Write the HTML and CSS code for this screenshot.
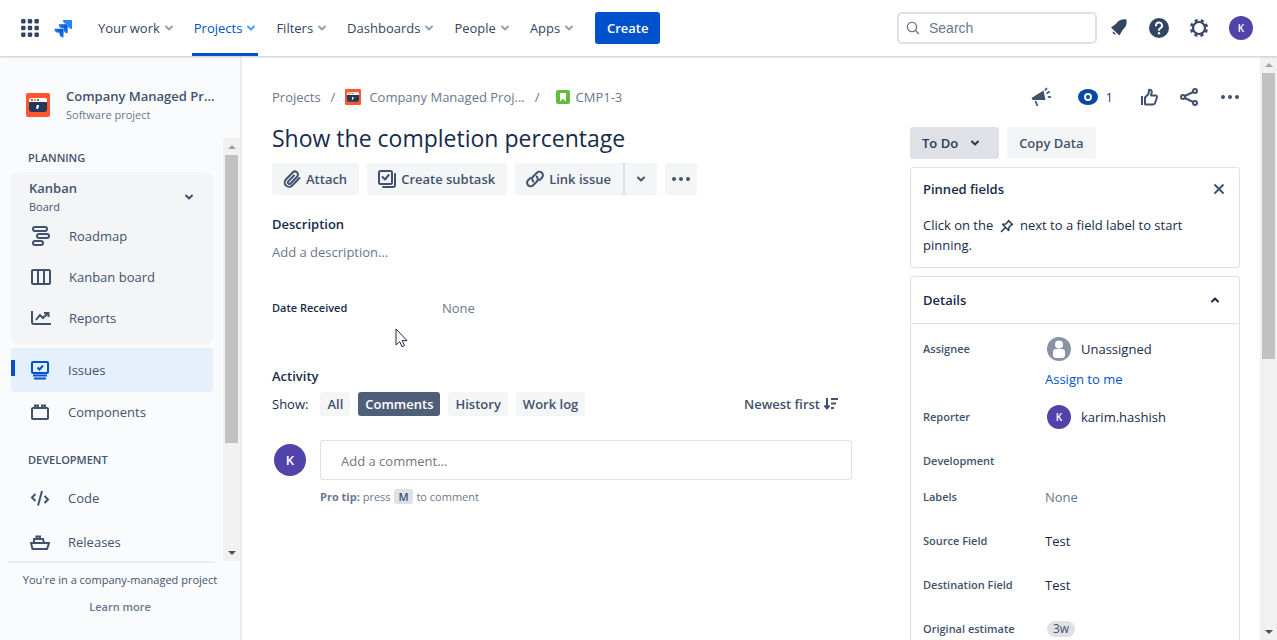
FILE: index.html
```html
<!DOCTYPE html>
<html lang="en">
<head>
<meta charset="utf-8">
<title>Show the completion percentage</title>
<link rel="stylesheet" href="styles.css">
</head>
<body>
<svg class="defs" aria-hidden="true">
  <symbol id="chev" viewBox="0 0 10 10"><path d="M2 3.500 5 6.500l3-3" fill="none" stroke="currentColor" stroke-width="2" stroke-linecap="round" stroke-linejoin="round"/></symbol>
  <symbol id="project" viewBox="0 0 24 24"><rect width="24" height="24" rx="2" fill="#ff5630"/><path d="M3 7a2 2 0 0 1 2-2h14a2 2 0 0 1 2 2v3H3z" fill="#fff"/><path d="M3 9h18v7a3 3 0 0 1-3 3H6a3 3 0 0 1-3-3z" fill="#253858"/><path d="M5 6h2v2H5z" fill="#ff5630"/><path d="M8 6h2v2H8z" fill="#ffab00"/><path d="M11 6h2v2h-2z" fill="#2684ff"/><path d="M11 12h2v1l-1 3h-1.600v-2.500z" fill="#fff"/></symbol>
</svg>
<header class="topbar">
  <button class="icon-btn apps" aria-label="Switch apps"><svg width="18" height="18" viewBox="0 0 18 18" fill="#344563"><rect x="1" y="1" width="4" height="4" rx="1"/><rect x="7" y="1" width="4" height="4" rx="1"/><rect x="13" y="1" width="4" height="4" rx="1"/><rect x="1" y="7" width="4" height="4" rx="1"/><rect x="7" y="7" width="4" height="4" rx="1"/><rect x="13" y="7" width="4" height="4" rx="1"/><rect x="1" y="13" width="4" height="4" rx="1"/><rect x="7" y="13" width="4" height="4" rx="1"/><rect x="13" y="13" width="4" height="4" rx="1"/></svg></button>
  <a class="logo" href="#" aria-label="Jira home"><svg width="19" height="19" viewBox="0 0 20 20"><defs><linearGradient id="g" x1="1" y1="0" x2="0.300" y2="0.700"><stop offset="0.200" stop-color="#0052cc"/><stop offset="1" stop-color="#2684ff"/></linearGradient></defs><path d="M9.500 1H19v9.500A4.300 4.300 0 0 1 14.700 6.200V5.200h-1A4.200 4.200 0 0 1 9.500 1z" fill="#2684ff"/><path d="M5 5.600h9.400v9.400a4.200 4.200 0 0 1-4.200-4.200v-1H9.200A4.200 4.200 0 0 1 5 5.600z" fill="url(#g)"/><path d="M.5 10.200H10v9.400a4.200 4.200 0 0 1-4.300-4.200v-1h-1a4.200 4.200 0 0 1-4.200-4.200z" fill="url(#g)"/></svg></a>
  <nav class="menu">
    <button>Your work<svg><use href="#chev"/></svg></button>
    <button class="current">Projects<svg><use href="#chev"/></svg></button>
    <button>Filters<svg><use href="#chev"/></svg></button>
    <button>Dashboards<svg><use href="#chev"/></svg></button>
    <button>People<svg><use href="#chev"/></svg></button>
    <button>Apps<svg><use href="#chev"/></svg></button>
  </nav>
  <button class="create">Create</button>
  <label class="search"><svg width="16" height="16" viewBox="0 0 16 16" fill="none" stroke="#6b778c" stroke-width="1.400" stroke-linecap="round"><circle cx="7" cy="7" r="4.600"/><path d="m10.500 10.500 3 3"/></svg><input type="text" placeholder="Search" aria-label="Search"></label>
  <div class="tools">
    <button class="icon-btn" aria-label="Notifications"><svg width="24" height="24" viewBox="0 0 24 24" fill="#344563"><path d="M4 11.500C6 10 8.500 8.500 10.500 6c2-2 5-3 9-2.600.6 4-.4 7-2.500 9-2 2-3 4.500-4.600 7z"/><path d="M6 15.200 9 18a2.100 2.100 0 0 1-3-2.800z"/></svg></button>
    <button class="icon-btn" aria-label="Help"><svg width="24" height="24" viewBox="0 0 24 24"><circle cx="12" cy="12" r="10" fill="#344563"/><path d="M9 9.400a3 3 0 1 1 4.400 2.700c-.9.500-1.400 1-1.400 2" fill="none" stroke="#fff" stroke-width="2" stroke-linecap="round"/><circle cx="12" cy="17.300" r="1.200" fill="#fff"/></svg></button>
    <button class="icon-btn" aria-label="Settings"><svg width="24" height="24" viewBox="0 0 24 24" fill="none" stroke="#344563"><circle cx="12" cy="12" r="6" stroke-width="2.200"/><circle cx="12" cy="12" r="7.900" stroke-width="2.400" stroke-dasharray="3.100 3.105" stroke-dashoffset="-1.550"/></svg></button>
    <button class="avatar small" aria-label="Your profile">K</button>
  </div>
</header>
<div class="page">
  <aside class="sidebar">
    <div class="project">
      <svg width="24" height="24"><use href="#project"/></svg>
      <div><div class="project-name">Company Managed Pr...</div><div class="project-type">Software project</div></div>
    </div>
    <div class="side-scroll">
      <nav class="side-nav">
        <h2>Planning</h2>
        <div class="board">
          <button class="board-head"><span><b>Kanban</b><small>Board</small></span><svg><use href="#chev"/></svg></button>
          <a href="#"><svg viewBox="0 0 20 20"><rect x="2" y="1" width="14" height="4" rx="2"/><rect x="6" y="8" width="12" height="4" rx="2"/><rect x="2" y="15" width="10" height="4" rx="2"/></svg>Roadmap</a>
          <a href="#"><svg viewBox="0 0 20 20"><rect x="1" y="3" width="18" height="14" rx="1"/><path d="M7 3v14M13 3v14"/></svg>Kanban board</a>
          <a href="#"><svg viewBox="0 0 20 20"><path d="M1 3v11a2 2 0 0 0 2 2h17M5 12l4-5 3 3 5-5M13 5h4.500v4"/></svg>Reports</a>
        </div>
        <a class="selected" href="#"><svg viewBox="0 0 20 20"><rect x="2" y="2" width="16" height="11" rx="1"/><path d="M3 15.500h14M4 18.500h12M7.500 7.500l2 2 3.500-4"/></svg>Issues</a>
        <a class="components" href="#"><svg viewBox="0 0 20 20"><rect x="2" y="6" width="16" height="11" rx="1"/><path d="M5 5.500V3.500h3v2M12 5.500V3.500h3v2"/></svg>Components</a>
        <h2 class="dev">Development</h2>
        <a href="#"><svg viewBox="0 0 20 20"><path d="M5.500 6 2 9.500 5.500 13M14.500 8l3.500 3.500-3.500 3.500M12 3 8 17.500"/></svg>Code</a>
        <a href="#"><svg viewBox="0 0 20 20"><path d="M1 11h18l-2 6H2.500zM4 11V7h9l1 4M6.500 7V4.500H10V7"/></svg>Releases</a>
      </nav>
      <div class="bar side-bar"><i class="up"></i><i class="thumb"></i><i class="down"></i></div>
    </div>
    <footer class="side-foot"><p>You're in a company-managed project</p><a href="#">Learn more</a></footer>
  </aside>
  <main class="issue">
    <section class="content">
      <nav class="crumbs"><a href="#">Projects</a><span>/</span><a href="#"><svg class="crumb-project"><use href="#project"/></svg>Company Managed Proj...</a><span>/</span><a href="#"><svg class="crumb-type" viewBox="0 0 14 14"><rect width="14" height="14" rx="2" fill="#63ba3c"/><path d="M4 3h6v8.500L7 8.800l-3 2.700z" fill="#fff"/></svg>CMP1-3</a></nav>
      <h1>Show the completion percentage</h1>
      <div class="actions">
        <button class="btn"><svg width="20" height="20" viewBox="0 0 20 20"><path d="m17.500 9-7.300 7.500a4.300 4.300 0 0 1-6.300-6l6.800-7a3 3 0 0 1 4.400 4.200l-6.600 6.800a1.500 1.500 0 0 1-2.200-2.100l5.700-5.900"/></svg>Attach</button>
        <button class="btn"><svg width="20" height="20" viewBox="0 0 20 20"><rect x="2" y="2" width="13" height="13" rx="1.500"/><path d="M18 5v11a2 2 0 0 1-2 2H6M5.500 8l2.500 2.500L11.700 6"/></svg>Create subtask</button>
        <div class="split"><button class="btn"><svg width="20" height="20" viewBox="0 0 20 20"><path d="M8.300 12.500a3.700 3.700 0 0 1 0-5.200l3.600-3.600a3.500 3.500 0 0 1 5 5l-2.400 2.400M11.700 7.500a3.700 3.700 0 0 1 0 5.200l-3.600 3.600a3.500 3.500 0 0 1-5-5l2.400-2.400"/></svg>Link issue</button><button class="btn narrow" aria-label="More link options"><svg width="10" height="10"><use href="#chev"/></svg></button></div>
        <button class="btn narrow" aria-label="More actions"><svg width="20" height="20" viewBox="0 0 20 20" class="dots"><circle cx="3" cy="10" r="2"/><circle cx="10" cy="10" r="2"/><circle cx="17" cy="10" r="2"/></svg></button>
      </div>
      <h3>Description</h3>
      <p class="placeholder">Add a description...</p>
      <dl class="date"><dt>Date Received</dt><dd>None</dd></dl>
      <h3>Activity</h3>
      <div class="filters"><span>Show:</span><button>All</button><button class="on">Comments</button><button>History</button><button>Work log</button>
        <button class="sort">Newest first<svg width="16" height="16" viewBox="0 0 16 16"><path d="M4 2v10M1.500 9.500 4 12.500l2.500-3M8 3h7M8 7.500h5M8 12h3"/></svg></button></div>
      <div class="comment"><span class="avatar">K</span><div class="comment-box"><input type="text" placeholder="Add a comment..." aria-label="Add a comment"><p><b>Pro tip:</b> press <kbd>M</kbd> to comment</p></div></div>
    </section>
    <aside class="side-panel">
      <div class="issue-tools">
        <button class="icon-btn" aria-label="Give feedback"><svg width="20" height="20" viewBox="0 0 20 20"><path d="M.5 11 12.500 3.500 14.500 13 1.500 13z" fill="#42526e"/><path d="m4.500 14 2 5M13.800 3.500 16 1M15.500 6.500l3.200-2M16.800 9.800l3.200.4" fill="none" stroke="#42526e" stroke-width="1.700"/></svg></button>
        <button class="watch"><svg width="20" height="16" viewBox="0 0 20 16"><ellipse cx="10" cy="8" rx="10" ry="8" fill="#0747a6"/><circle cx="10" cy="8" r="3" fill="none" stroke="#fff" stroke-width="2"/></svg>1</button>
        <button class="icon-btn" aria-label="Vote"><svg width="18" height="18" viewBox="0 0 18 18" fill="none" stroke="#42526e" stroke-width="2" stroke-linejoin="round"><path d="M2 8v9M5 16V9.500L8.500 6l.5-4c1.500-.6 3 .4 2.700 2.500L11 7.500h4.500c1.300 0 1.700 1 1.300 2.200l-1.600 5.100c-.3 1-.9 1.700-2 1.700H6.500A1.500 1.500 0 0 1 5 16z"/></svg></button>
        <button class="icon-btn" aria-label="Share"><svg width="20" height="20" viewBox="0 0 20 20" fill="none" stroke="#42526e" stroke-width="2"><circle cx="4" cy="10" r="2"/><circle cx="16" cy="4" r="2"/><circle cx="16" cy="16" r="2"/><path d="m5.800 9 8.400-4M5.800 11l8.400 4"/></svg></button>
        <button class="icon-btn" aria-label="Actions"><svg width="20" height="20" viewBox="0 0 20 20" fill="#42526e"><circle cx="3" cy="10" r="2"/><circle cx="10" cy="10" r="2"/><circle cx="17" cy="10" r="2"/></svg></button>
      </div>
      <div class="status-row"><button class="btn status">To Do<svg width="10" height="10"><use href="#chev"/></svg></button><button class="btn">Copy Data</button></div>
      <section class="card pinned">
        <header><h3>Pinned fields</h3><button class="icon-btn" aria-label="Close"><svg width="12" height="12" viewBox="0 0 12 12" stroke="#42526e" stroke-width="2"><path d="m1.500 1.500 9 9M10.500 1.500l-9 9"/></svg></button></header>
        <p>Click on the <svg width="14" height="14" viewBox="0 0 14 14" fill="none" stroke="#253858" stroke-width="1.500" stroke-linejoin="round"><path d="m8.500 1.500 4 4-1.300.5L9 8.200l-.3 3.300L2.500 5.300 5.800 5 8 2.800zM5.200 8.800 1 13"/></svg> next to a field label to start pinning.</p>
      </section>
      <section class="card details">
        <button class="details-head">Details<svg width="10" height="10"><use href="#chev"/></svg></button>
        <dl>
          <div class="person"><dt>Assignee</dt><dd><svg width="24" height="24" viewBox="0 0 24 24"><circle cx="12" cy="12" r="12" fill="#8993a4"/><circle cx="12" cy="7.500" r="4" fill="#fff"/><rect x="6" y="12" width="12" height="9" rx="3" fill="#fff"/></svg>Unassigned</dd></div>
          <div class="assign"><dd><a href="#">Assign to me</a></dd></div>
          <div class="reporter"><dt>Reporter</dt><dd><span class="avatar small">K</span>karim.hashish</dd></div>
          <div class="dev-row"><dt>Development</dt><dd></dd></div>
          <div class="labels"><dt>Labels</dt><dd class="none">None</dd></div>
          <div><dt>Source Field</dt><dd>Test</dd></div>
          <div><dt>Destination Field</dt><dd>Test</dd></div>
          <div><dt>Original estimate</dt><dd><span class="lozenge">3w</span></dd></div>
        </dl>
      </section>
    </aside>
  </main>
  <div class="bar page-bar"><i class="up"></i><i class="thumb"></i><i class="down"></i></div>
</div>
<svg class="pointer" width="13" height="20" viewBox="0 0 13 20"><path d="M1 1v16l3.700-3.500L7 18.700l2.500-1.100-2.300-5h4.800z" fill="#fff" stroke="#172b4d"/></svg>
</body>
</html>
```
FILE: styles.css
```css
* { box-sizing: border-box; }
body {
  margin: 0;
  height: 100vh;
  overflow: hidden;
  display: flex;
  flex-direction: column;
  font: 13px/20px "Open Sans", "Noto Sans", sans-serif;
  color: #172b4d;
  background: #fff;
}
button, input { font: inherit; color: inherit; }
button { border: 0; padding: 0; background: none; }
svg { flex: none; }
a { color: inherit; text-decoration: none; }
h1, h2, h3, p, dl, dd { margin: 0; }
.defs { position: absolute; width: 0; height: 0; }
.icon-btn { display: flex; align-items: center; justify-content: center; }

.topbar {
  flex: none;
  display: flex;
  align-items: center;
  height: 56px;
  padding: 0 24px 0 20px;
  background: #fff;
  box-shadow: 0 1px 2px #c1c7d0;
  z-index: 1;
}
.apps { margin-right: 14px; }
.apps svg { width: 20px; height: 20px; }
.logo { display: flex; margin-right: 23px; }
.menu { display: flex; align-self: stretch; gap: 16px; margin-right: 19px; }
.menu button {
  display: flex;
  align-items: center;
  gap: 4px;
  padding: 3px 2px 0;
  color: #344563;
  font-weight: 500;
  border-bottom: 3px solid transparent;
}
.menu svg { width: 10px; height: 10px; color: #97a0af; }
.menu .current { color: #0052cc; border-color: #0052cc; }
.menu .current svg { color: #4c9aff; }
.create { width: 65px; height: 32px; border-radius: 3px; background: #0052cc; color: #fff; font-weight: 600; }
.search {
  display: flex;
  align-items: center;
  gap: 8px;
  width: 200px;
  height: 32px;
  margin-left: auto;
  padding: 0 6px;
  border: 2px solid #dfe1e6;
  border-radius: 5px;
}
.search input { width: 100%; border: 0; padding: 0; outline: 0; background: none; font-family: "Liberation Sans", Arial, sans-serif; font-size: 14px; }
.search input::placeholder { color: #6b778c; opacity: 1; }
.tools { display: flex; align-items: center; gap: 16px; margin-left: 10px; }
.tools .avatar { margin-left: 2px; }
.avatar {
  flex: none;
  display: grid;
  place-items: center;
  width: 32px;
  height: 32px;
  border-radius: 50%;
  background: #5243aa;
  color: #fff;
  font-size: 13px;
  font-weight: 600;
}
.avatar.small { width: 24px; height: 24px; font-size: 10px; }

.page { flex: 1; min-height: 0; display: flex; }
.sidebar {
  flex: none;
  width: 242px;
  display: flex;
  flex-direction: column;
  background: #fafbfc;
  border-right: 2px solid #ebecf0;
  color: #42526e;
}
.project { display: flex; align-items: center; gap: 16px; height: 82px; padding: 16px 20px 0 26px; }
.project-name { font-weight: 600; white-space: nowrap; }
.project-type { font-size: 11px; line-height: 18px; color: #6b778c; }
.side-scroll { flex: 1; min-height: 0; display: flex; }
.side-nav { flex: 1; overflow: hidden; padding: 0 10px 0 11px; }
.side-nav h2 { padding: 10px 17px 4px; font-size: 11px; line-height: 20px; font-weight: 600; text-transform: uppercase; }
.side-nav .dev { padding-top: 18px; padding-bottom: 6px; }
.side-nav a { display: flex; align-items: center; gap: 18px; height: 44px; padding: 0 19px; border-radius: 4px; }
.side-nav a svg { width: 20px; height: 20px; fill: none; stroke: currentColor; stroke-width: 2; }
.side-nav .board a { height: 41px; padding-left: 20px; }
.side-nav .components { height: 40px; }
.board { margin-bottom: 4px; padding: 6px 0; border-radius: 8px; background: #f4f5f7; }
.board-head { display: flex; justify-content: space-between; align-items: center; width: 100%; height: 37px; padding: 0 19px 0 18px; text-align: left; }
.board-head b { display: block; font-weight: 600; }
.board-head small { display: block; font-size: 11px; line-height: 18px; }
.board-head svg { width: 10px; height: 10px; }
.side-nav .selected { background: linear-gradient(#0052cc, #0052cc) 0 12px / 4px 16px no-repeat #e6effc; }
.selected svg { color: #0052cc; }
.side-foot { height: 79px; margin-right: 25px; margin-left: 8px; border-top: 2px solid #ebecf0; text-align: center; font-size: 11px; }
.side-foot p { padding: 7px 0; white-space: nowrap; margin-right: -17px; }
.side-foot a { font-weight: 600; color: #6b778c; margin-right: -17px; }

.bar { flex: none; display: flex; flex-direction: column; align-items: center; width: 17px; background: #f1f1f1; }
.bar .thumb { width: 13px; background: #c1c1c1; }
.bar .up, .bar .down { width: 0; margin: 7px 0 6px; border: 4px solid transparent; border-top: 0; border-bottom-color: #a3a3a3; }
.bar .down { margin: auto 0 6px; border: 4px solid transparent; border-bottom: 0; border-top-color: #505050; }
.side-bar .thumb { height: 68%; }
.page-bar .thumb { height: 49%; }

.issue { flex: 1; min-width: 0; display: flex; justify-content: space-between; gap: 58px; padding: 30px 20px 0 30px; overflow: hidden; }
.content { flex: 1; min-width: 0; }
.crumbs { display: flex; align-items: center; height: 22px; gap: 10px; color: #6b778c; white-space: nowrap; }
.crumbs a { display: flex; align-items: center; gap: 8px; }
.crumb-project { width: 16px; height: 16px; }
.crumb-type { width: 14px; height: 14px; margin-left: 6px; }
.crumbs a:last-child { gap: 6px; }
h1 { padding: 16px 0 10px; font-size: 23px; line-height: 29px; font-weight: 500; }
.actions { display: flex; gap: 8px; margin-bottom: 19px; }
.btn {
  display: flex;
  align-items: center;
  justify-content: center;
  gap: 4px;
  height: 32px;
  padding: 0 12px 0 10px;
  border-radius: 3px;
  background: #f4f5f7;
  color: #42526e;
  font-weight: 600;
  white-space: nowrap;
}
.btn svg { fill: none; stroke: currentColor; stroke-width: 2; stroke-linecap: round; stroke-linejoin: round; }
.btn svg.dots { fill: currentColor; stroke: none; }
.btn.narrow { width: 32px; padding: 0; }
.split { display: flex; gap: 2px; background: #dfe1e6; border-radius: 3px; }
h3 { font-size: 13px; line-height: 20px; font-weight: 600; }
.placeholder { padding-top: 8px; color: #6b778c; }
.date { display: grid; grid-template-columns: 170px 1fr; padding: 36px 0 48px; }
.date dt { font-size: 11px; font-weight: 600; }
.date dd, .none { color: #6b778c; }
.filters { display: flex; align-items: center; gap: 8px; height: 24px; margin: 6px 0 24px; }
.filters button { height: 24px; padding: 0 7px; border-radius: 3px; background: #f4f5f7; color: #42526e; font-weight: 600; white-space: nowrap; }
.filters span { margin-right: 4px; }
.filters .on { background: #505f79; color: #fff; }
.filters .sort { display: flex; align-items: center; gap: 3px; margin-left: auto; padding-right: 13px; background: none; }
.sort svg { fill: none; stroke: currentColor; stroke-width: 2; }
.comment { display: flex; gap: 14px; padding-left: 2px; }
.comment .avatar { margin-top: 4px; }
.comment-box { flex: 1; font-size: 11px; color: #6b778c; }
.comment-box input { width: 100%; height: 40px; padding: 2px 20px 0; border: 1px solid #dfe1e6; border-radius: 3px; font-size: 13px; }
.comment-box input::placeholder { color: #757575; opacity: 1; }
.comment-box p { padding-top: 7px; }
kbd { margin: 0 1px; padding: 0 4px; border-radius: 3px; background: #dfe1e6; color: #42526e; font: inherit; font-weight: 600; }

.side-panel { flex: none; width: 330px; }
.issue-tools { display: flex; align-items: center; justify-content: flex-end; gap: 21px; height: 22px; }
.issue-tools .icon-btn:first-child { margin-right: 6px; }
.watch { display: flex; align-items: center; gap: 8px; margin-right: 6px; color: #0747a6; }
.status-row { display: flex; gap: 8px; margin: 19px 0 8px; }
.status-row .btn { padding: 0 13px 0 12px; }
.status-row .status { gap: 12px; padding-right: 19px; background: #dfe1e6; color: #253858; }
.card { border: 1px solid #dfe1e6; border-radius: 3px; margin-bottom: 8px; }
.pinned { padding: 11px 12px 12px; }
.pinned header { display: flex; justify-content: space-between; align-items: center; margin-bottom: 16px; }
.pinned header button { margin-right: 2px; }
.pinned p svg { vertical-align: -3px; margin: 0 3px; }
.details-head { display: flex; justify-content: space-between; align-items: center; width: 100%; height: 47px; padding: 0 19px 0 12px; border-bottom: 1px solid #dfe1e6; font-weight: 600; }
.details-head svg { transform: rotate(180deg); }
.details dl { padding: 10px 12px; }
.details dl div { display: grid; grid-template-columns: 122px 1fr; align-items: center; height: 44px; }
.details dt { font-size: 11px; font-weight: 600; color: #42526e; }
.details dd { display: flex; align-items: center; gap: 10px; }
.details dl .person, .details dl .assign { height: 30px; }
.assign dd { grid-column: 2; color: #0052cc; }
.person svg, .reporter .avatar { margin-left: 2px; }
.details dl .reporter { height: 46px; }
.details dl .dev-row { height: 42px; }
.details dl .labels { height: 30px; margin-bottom: 7px; }
.lozenge { margin-left: 2px; padding: 0 6px; border-radius: 8px; background: #dfe1e6; color: #42526e; font-size: 12px; line-height: 16px; }
.pointer { position: absolute; left: 395px; top: 328px; }
```
